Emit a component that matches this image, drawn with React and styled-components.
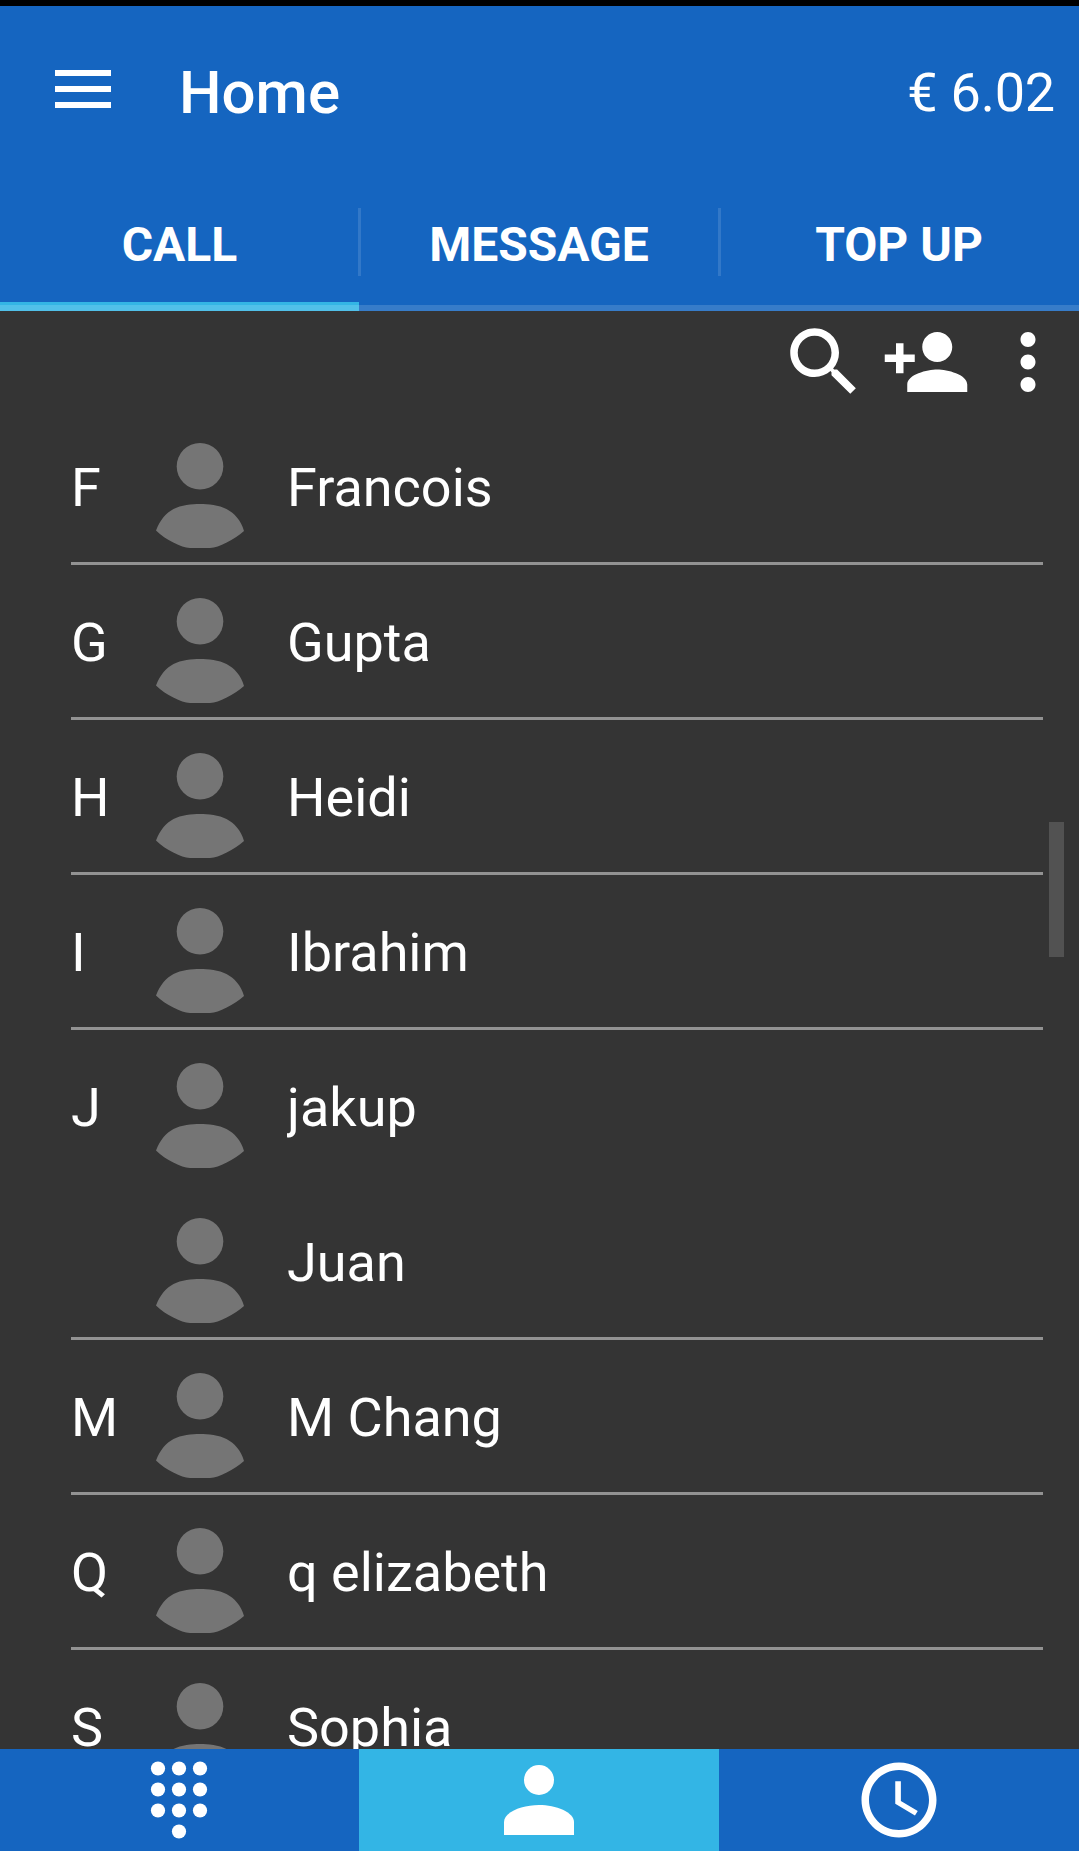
import React from 'react'
import styled, { createGlobalStyle } from "styled-components";

const contacts = [
    { letter: "F", name: "Francois", divider: true },
    { letter: "G", name: "Gupta", divider: true },
    { letter: "H", name: "Heidi", divider: true },
    { letter: "I", name: "Ibrahim", divider: true },
    { letter: "J", name: "jakup", divider: false },
    { letter: "", name: "Juan", divider: true },
    { letter: "M", name: "M Chang", divider: true },
    { letter: "Q", name: "q elizabeth", divider: true },
    { letter: "S", name: "Sophia", divider: true }
]

const tabs = ["CALL", "MESSAGE", "TOP UP"]

const dialDots = [
    [23, 13.5], [44, 13.5], [65, 13.5],
    [23, 34.5], [44, 34.5], [65, 34.5],
    [23, 55.5], [44, 55.5], [65, 55.5],
    [44, 76.5]
]

const GlobalStyle = createGlobalStyle`
  body {
    margin: 0;
    background: #343434;
  }
`;

const Screen = styled.div`
  display: flex;
  flex-direction: column;
  box-sizing: border-box;
  height: 1851px;
  border-top: 6px solid #000;
  background: #343434;
  color: #fff;
  font-family: Roboto, sans-serif;
  overflow: hidden;
`;

const Header = styled.header`
  flex: none;
  background: #1565c0;
`;

const Toolbar = styled.div`
  display: flex;
  align-items: center;
  box-sizing: border-box;
  height: 161px;
  padding: 13px 24px 0 55px;
`;

const MenuButton = styled.div`
  display: flex;
  flex-direction: column;
  gap: 10px;
  width: 56px;
  margin: 0 68px 9px 0;
`;

const MenuBar = styled.span`
  height: 6px;
  background: #fff;
`;

const Title = styled.h1`
  flex: 1;
  margin: 0;
  font-size: 60px;
  font-weight: 500;
  line-height: 70px;
`;

const Balance = styled.span`
  font-size: 54px;
  line-height: 64px;
  letter-spacing: -0.2px;
`;

const Tabs = styled.nav`
  display: grid;
  grid-template-columns: 359px 360px 360px;
  height: 144px;
`;

const Tab = styled.div`
  position: relative;
  display: flex;
  align-items: center;
  justify-content: center;
  box-sizing: border-box;
  padding-top: 10px;
  font-size: 48px;
  font-weight: 700;
  background: ${props => (props.$active
    ? "linear-gradient(#33b5e5, #33b5e5) bottom / 100% 9px no-repeat"
    : "none")};

  &::before {
    content: "";
    position: absolute;
    left: 0;
    right: 0;
    bottom: 0;
    height: 6px;
    background: rgba(255, 255, 255, 0.15);
  }

  &:not(:first-child)::after {
    content: "";
    position: absolute;
    left: -1px;
    top: 41px;
    width: 3px;
    height: 68px;
    background: rgba(255, 255, 255, 0.125);
  }
`;

const Actions = styled.div`
  display: flex;
  flex: none;
  justify-content: flex-end;
  gap: 12px;
  box-sizing: border-box;
  height: 99px;
  padding: 6px 6px 0 0;
`;

const Icon = styled.svg`
  display: block;
  width: 90px;
  height: 90px;
  fill: #fff;
`;

const ListArea = styled.main`
  position: relative;
  flex: 1;
  min-height: 0;
  overflow: hidden;
`;

const ContactList = styled.ul`
  margin: 0;
  padding: 0 36px 0 71px;
  list-style: none;
`;

const Contact = styled.li`
  display: grid;
  grid-template-columns: 64px 130px 1fr;
  align-items: center;
  box-sizing: border-box;
  height: 155px;
  border-bottom: 3px solid ${props => (props.$divider ? "#929292" : "transparent")};
  font-size: 54px;
  line-height: 64px;
`;

const Avatar = styled.svg`
  display: block;
  width: 130px;
  height: 130px;
  margin-top: 22px;
  fill: #757575;
`;

const ContactText = styled.span`
  padding-top: 3px;
  white-space: nowrap;
`;

const Name = styled(ContactText)`
  margin-left: 22px;
  overflow: hidden;
`;

const ScrollThumb = styled.div`
  position: absolute;
  top: 412px;
  right: 15px;
  width: 15px;
  height: 135px;
  background: #525252;
`;

const BottomBar = styled.footer`
  display: grid;
  flex: none;
  grid-template-columns: 359px 360px 360px;
  height: 102px;
`;

const BottomItem = styled.div`
  display: flex;
  align-items: center;
  justify-content: center;
  background: ${props => (props.$active ? "#33b5e5" : "#1565c0")};
`;

class App extends React.Component{
    state = {
        tab: "CALL"
    }

    render(){
        return(
            <Screen>
                <GlobalStyle />
                <Header>
                    <Toolbar>
                        <MenuButton>
                            <MenuBar />
                            <MenuBar />
                            <MenuBar />
                        </MenuButton>
                        <Title>Home</Title>
                        <Balance>€ 6.02</Balance>
                    </Toolbar>
                    <Tabs>
                        {tabs.map(tab => (
                            <Tab key={tab} $active={tab === this.state.tab} onClick={() => this.setState({ tab })}>{tab}</Tab>
                        ))}
                    </Tabs>
                </Header>
                <Actions>
                    <Icon viewBox="0 0 24 24">
                        <path d="M15.5 14h-.79l-.28-.27C15.41 12.59 16 11.11 16 9.5 16 5.91 13.09 3 9.5 3S3 5.91 3 9.5 5.91 16 9.5 16c1.61 0 3.09-.59 4.23-1.57l.27.28v.79l5 4.99L20.49 19l-4.99-5zm-6 0C7.01 14 5 11.99 5 9.5S7.01 5 9.5 5 14 7.01 14 9.5 11.99 14 9.5 14z" />
                    </Icon>
                    <Icon viewBox="0 0 24 24">
                        <path d="M15 12c2.21 0 4-1.79 4-4s-1.79-4-4-4-4 1.79-4 4 1.79 4 4 4zm-9-2V7H4v3H1v2h3v3h2v-3h3v-2H6zm9 4c-2.67 0-8 1.34-8 4v2h16v-2c0-2.66-5.33-4-8-4z" />
                    </Icon>
                    <Icon viewBox="0 0 24 24">
                        <path d="M12 8c1.1 0 2-.9 2-2s-.9-2-2-2-2 .9-2 2 .9 2 2 2zm0 2c-1.1 0-2 .9-2 2s.9 2 2 2 2-.9 2-2-.9-2-2-2zm0 6c-1.1 0-2 .9-2 2s.9 2 2 2 2-.9 2-2-.9-2-2-2z" />
                    </Icon>
                </Actions>
                <ListArea>
                    <ContactList>
                        {contacts.map(contact => (
                            <Contact key={contact.name} $divider={contact.divider}>
                                <ContactText>{contact.letter}</ContactText>
                                <Avatar viewBox="0 0 130 130">
                                    <circle cx="65" cy="34.3" r="23.3" />
                                    <path d="M21 98.5C25 88 31 81 38.5 77C46 73 57 72 65 72S84 73 91.500 77C99 81 106 88 109 99C104 103.500 98 107.500 91.700 110.500C85 114 80 115.500 75 116H55C50 115.500 45 114 38.300 110.500C32 107.500 26 103.500 21 98.5Z" />
                                </Avatar>
                                <Name>{contact.name}</Name>
                            </Contact>
                        ))}
                    </ContactList>
                    <ScrollThumb />
                </ListArea>
                <BottomBar>
                    <BottomItem>
                        <Icon viewBox="0 0 90 90">
                            {dialDots.map(([x, y]) => <circle key={x + "-" + y} cx={x} cy={y} r="7.1" />)}
                        </Icon>
                    </BottomItem>
                    <BottomItem $active>
                        <Icon viewBox="0 0 90 90">
                            <circle cx="45" cy="25" r="15" />
                            <path d="M10 80V67C10 57 28 50 45 50S80 57 80 67V80Z" />
                        </Icon>
                    </BottomItem>
                    <BottomItem>
                        <Icon viewBox="0 0 24 24">
                            <path d="M11.99 2C6.47 2 2 6.48 2 12s4.47 10 9.99 10C17.52 22 22 17.52 22 12S17.52 2 11.99 2zM12 20c-4.42 0-8-3.58-8-8s3.58-8 8-8 8 3.58 8 8-3.58 8-8 8z" />
                            <path d="M12.5 7H11v6l5.25 3.15.75-1.23-4.5-2.67z" />
                        </Icon>
                    </BottomItem>
                </BottomBar>
            </Screen>
        )
    }
}

export default App;
